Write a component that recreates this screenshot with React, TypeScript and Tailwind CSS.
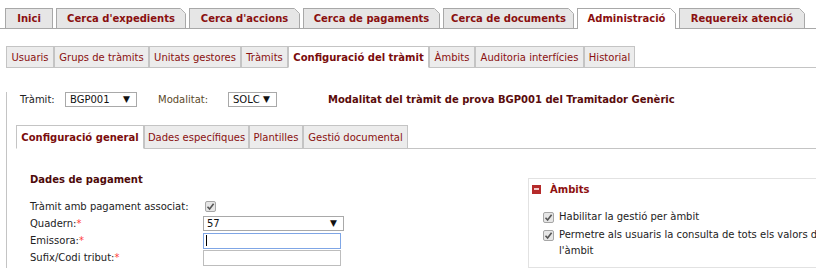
import React from "react";

const topTabs = [
  { label: "Inici", w: "w-[48px]", fold: false, active: false },
  { label: "Cerca d'expedients", w: "w-[130px]", fold: true, active: false },
  { label: "Cerca d'accions", w: "w-[111px]", fold: true, active: false },
  { label: "Cerca de pagaments", w: "w-[137px]", fold: true, active: false },
  { label: "Cerca de documents", w: "w-[131px]", fold: true, active: false },
  { label: "Administració", w: "w-[99px]", fold: true, active: true },
  { label: "Requereix atenció", w: "w-[126px]", fold: true, active: false },
];

const subTabs = [
  { label: "Usuaris", w: "w-[48px]", active: false },
  { label: "Grups de tràmits", w: "w-[95px]", active: false },
  { label: "Unitats gestores", w: "w-[92px]", active: false },
  { label: "Tràmits", w: "w-[47px]", active: false },
  { label: "Configuració del tràmit", w: "w-[141px]", active: true },
  { label: "Àmbits", w: "w-[46px]", active: false },
  { label: "Auditoria interfícies", w: "w-[109px]", active: false },
  { label: "Historial", w: "w-[51px]", active: false },
];

const confTabs = [
  { label: "Configuració general", w: "w-[128px]", active: true },
  { label: "Dades específiques", w: "w-[105px]", active: false },
  { label: "Plantilles", w: "w-[54px]", active: false },
  { label: "Gestió documental", w: "w-[105px]", active: false },
];

function Fold() {
  return (
    <svg className="absolute -right-px -top-px" width="6" height="6" viewBox="0 0 6 6">
      <polygon points="0,0 6,0 6,6" fill="#ffffff" />
      <line x1="0.5" y1="0.5" x2="5.5" y2="5.5" stroke="#b0b0b0" strokeWidth="1" />
    </svg>
  );
}

function Check() {
  return (
    <span className="flex h-[11px] w-[11px] items-center justify-center rounded-[2px] border border-[#a6a6a6] bg-[#e6e6e6]">
      <svg width="9" height="9" viewBox="0 0 9 9">
        <path d="M1.5 4.8 L3.6 7 L7.6 1.8" fill="none" stroke="#555" strokeWidth="1.6" />
      </svg>
    </span>
  );
}

function Select({ value, w }: { value: string; w: string }) {
  return (
    <div className={`flex h-[15px] items-center justify-between border border-[#a9a9a9] bg-white pl-[4px] pr-[6px] text-[10px] leading-none text-[#111] ${w}`}>
      <span>{value}</span>
      <span className="text-[9px]">▼</span>
    </div>
  );
}

function Req({ label }: { label: string }) {
  return (
    <span>
      {label}
      <span className="text-[#ff3b3b]">*</span>
    </span>
  );
}

export default function App() {
  return (
    <div className="h-[279px] w-[816px] overflow-hidden whitespace-nowrap bg-white font-['DejaVu_Sans',Verdana,sans-serif] text-[10px] text-[#333]">
      {/* Top tabs */}
      <div className="flex items-end gap-[3px] border-b border-[#a8a8a8] pl-[5px] pt-[8px]">
        {topTabs.map((t) => (
          <div
            key={t.label}
            className={
              t.active
                ? `relative -mb-px flex h-[21px] items-center justify-center border border-b-0 border-[#a8a8a8] bg-white pb-px font-bold text-[#8a1010] ${t.w}`
                : `relative flex h-[20px] items-center justify-center border border-b-0 border-[#a8a8a8] bg-[#e6e6e6] font-bold text-[#8a1010] ${t.w}`
            }
          >
            {t.label}
            {t.fold ? <Fold /> : null}
          </div>
        ))}
      </div>

      {/* Sub tabs and content */}
      <div className="ml-[6px] mt-[17px]">
        <div className="flex">
          {subTabs.map((t) => (
            <div
              key={t.label}
              className={
                t.active
                  ? `flex h-[22px] items-center justify-center border border-b-white border-[#c4c4c4] bg-white font-bold text-[#7a0c0c] ${t.w}`
                  : `flex h-[22px] items-center justify-center border border-[#c4c4c4] bg-[#ececec] text-[#8a1010] ${t.w}`
              }
            >
              {t.label}
            </div>
          ))}
          <div className="flex-1 border-b border-[#c4c4c4]" />
        </div>

        <div className="border-l border-[#c4c4c4]">
          {/* Tràmit / Modalitat row */}
          <div className="ml-[13px] mt-[24px] flex h-[15px] items-center">
            <span className="w-[45px] text-[#222]">Tràmit:</span>
            <Select value="BGP001" w="w-[72px]" />
            <span className="ml-[21px] w-[70px] text-[#5c4a2a]">Modalitat:</span>
            <Select value="SOLC" w="w-[49px]" />
            <span className="ml-[51px] font-bold text-[#5a0c0c]">
              Modalitat del tràmit de prova BGP001 del Tramitador Genèric
            </span>
          </div>

          {/* Configuration tabs */}
          <div className="ml-[9px] mt-[18px] flex">
            {confTabs.map((t) => (
              <div
                key={t.label}
                className={
                  t.active
                    ? `flex h-[24px] items-center justify-center border border-b-white border-[#c4c4c4] bg-white font-bold text-[#7a0c0c] ${t.w}`
                    : `flex h-[24px] items-center justify-center border border-[#c4c4c4] bg-[#ececec] text-[#8a1010] ${t.w}`
                }
              >
                {t.label}
              </div>
            ))}
            <div className="flex-1 border-b border-[#c4c4c4]" />
          </div>

          {/* Lower section */}
          <div className="flex">
            <div className="ml-[23px] mt-[24px] w-[498px] shrink-0">
              <div className="h-[14px] font-bold leading-[14px] text-[#4e0a0a]">Dades de pagament</div>
              <div className="mt-[11px] flex flex-col">
                <div className="flex h-[17px] items-center">
                  <span className="w-[175px] text-[#222]">Tràmit amb pagament associat:</span>
                  <Check />
                </div>
                <div className="flex h-[17px] items-center">
                  <span className="w-[173px] text-[#222]">
                    <Req label="Quadern:" />
                  </span>
                  <div className="flex h-[15px] w-[141px] items-center justify-between border border-[#a9a9a9] bg-white pl-[3px] pr-[6px] leading-none text-[#111]">
                    <span>57</span>
                    <span className="text-[9px]">▼</span>
                  </div>
                </div>
                <div className="flex h-[17px] items-center">
                  <span className="w-[173px] text-[#222]">
                    <Req label="Emissora:" />
                  </span>
                  <div className="flex h-[16px] w-[138px] items-center border border-[#7fa6e6] bg-white pl-[2px]">
                    <span className="h-[11px] w-px bg-black" />
                  </div>
                </div>
                <div className="flex h-[17px] items-center">
                  <span className="w-[173px] text-[#222]">
                    <Req label="Sufix/Codi tribut:" />
                  </span>
                  <div className="h-[16px] w-[138px] border border-[#bdbdbd] bg-white" />
                </div>
              </div>
            </div>

            {/* Àmbits panel */}
            <div className="mt-[29px] w-[320px] shrink-0 self-start border border-[#e2e2e2] pb-[8px]">
              <div className="flex h-[20px] items-center pl-[3px]">
                <span className="flex h-[9px] w-[9px] items-center justify-center bg-[#b52a2a]">
                  <span className="h-[2px] w-[5px] bg-[#f4caca]" />
                </span>
                <span className="ml-[9px] font-bold text-[#8e1010]">Àmbits</span>
              </div>
              <div className="mt-[10px] flex flex-col gap-[2px] pl-[14px]">
                <div className="flex items-start gap-[5px] leading-[16px]">
                  <span className="mt-[3px]">
                    <Check />
                  </span>
                  <span className="text-[#222]">Habilitar la gestió per àmbit</span>
                </div>
                <div className="flex items-start gap-[5px] leading-[16px]">
                  <span className="mt-[3px]">
                    <Check />
                  </span>
                  <span className="text-[#222]">
                    Permetre als usuaris la consulta de tots els valors de
                    <br />
                    l'àmbit
                  </span>
                </div>
              </div>
            </div>
          </div>
        </div>
      </div>
    </div>
  );
}
